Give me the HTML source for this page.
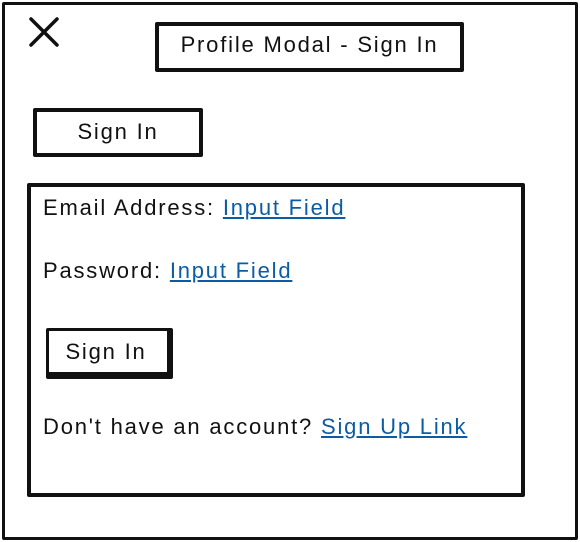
<!DOCTYPE html>
<html><head><style>
body{margin:0;width:580px;height:542px;background:#fff;position:relative;overflow:hidden;font-family:"Liberation Sans",sans-serif;color:#111;}
.b{position:absolute;box-sizing:border-box;border:3px solid #111;border-radius:2px;background:#fff;}
.t{position:absolute;font-size:22px;white-space:nowrap;line-height:26px;letter-spacing:1.8px;}
a{color:#0b5ca3;text-decoration:underline;}
</style></head><body>
<div class="b" style="left:2px;top:2px;width:576px;height:538px;border-width:3px;"></div>
<svg style="position:absolute;left:28px;top:16px" width="34" height="34"><path d="M3 3 L29 29 M29 3 L3 29" stroke="#111" stroke-width="3.5" stroke-linecap="round"/></svg>
<div class="b" style="left:155px;top:22px;width:309px;height:50px;border-width:4px;"></div>
<div class="t" style="left:155px;top:32px;width:309px;text-align:center;">Profile Modal - Sign In</div>
<div class="b" style="left:33px;top:108px;width:170px;height:49px;border-width:4px;"></div>
<div class="t" style="left:33px;top:119px;width:170px;text-align:center;">Sign In</div>
<div class="b" style="left:27px;top:183px;width:498px;height:314px;border-width:4px;"></div>
<div class="t" style="left:43px;top:195px;">Email Address: <a>Input Field</a></div>
<div class="t" style="left:43px;top:258px;">Password: <a>Input Field</a></div>
<div class="b" style="left:46px;top:328px;width:127px;height:51px;border-width:3px;border-right-width:6px;border-bottom-width:7px;"></div>
<div class="t" style="left:46px;top:339px;width:120px;text-align:center;">Sign In</div>
<div class="t" style="left:43px;top:414px;">Don't have an account? <a>Sign Up Link</a></div>
</body></html>
